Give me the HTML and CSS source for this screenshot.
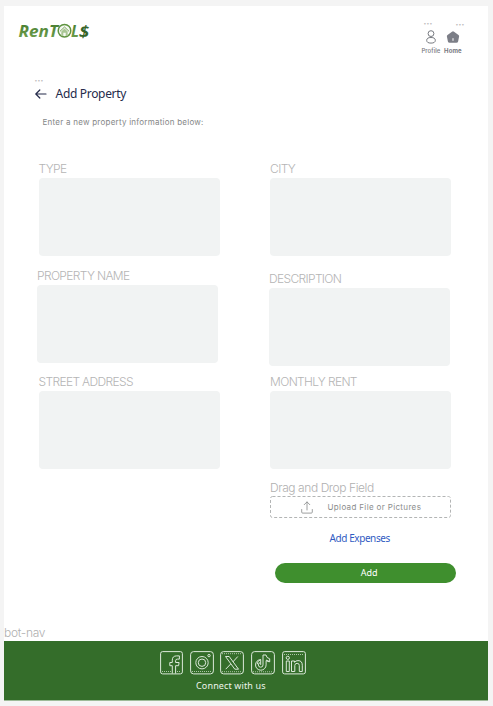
FILE: index.html
```html
<!DOCTYPE html>
<html lang="en">
<head>
<meta charset="utf-8">
<title>Add Property</title>
<link rel="stylesheet" href="styles.css">
</head>
<body>
<div class="page">
  <header class="top">
    <svg class="logo" width="84" height="28" viewBox="0 0 84 28">
      <defs>
        <linearGradient id="leaf" x1="0" y1="0" x2="0" y2="1"><stop offset="0" stop-color="#3c7429"/><stop offset="1" stop-color="#78a653"/></linearGradient>
      </defs>
      <g class="logo-text" fill="url(#leaf)">
        <text x="1.500" y="18" textLength="39.500" lengthAdjust="spacingAndGlyphs">RenT</text>
        <text x="54" y="18" textLength="8" lengthAdjust="spacingAndGlyphs">L</text>
      </g>
      <text class="logo-dollar" x="62" y="18" textLength="10" lengthAdjust="spacingAndGlyphs">$</text>
      <circle cx="47.500" cy="11.700" r="6.300" fill="#f6f9f3" stroke="#5f9340" stroke-width="1.500"/>
      <path d="M43 12.300l4.500-4.300 4.500 4.300" fill="none" stroke="#79a55a" stroke-width="1"/>
      <path d="M44.300 12.500l3.200-3 3.200 3V17h-2v-3.300h-2.400V17h-2Z" fill="#a9c694"/>
    </svg>
    <nav class="nav">
      <a class="nav-item profile"><span class="dots">•••</span>
        <svg width="12" height="14" viewBox="0 0 12 14" fill="none" stroke="#777a80" stroke-width="1"><circle cx="6" cy="3.600" r="2.900"/><ellipse cx="6" cy="10.300" rx="4.300" ry="2.800"/></svg>
        <span>Profile</span></a>
      <a class="nav-item home"><span class="dots">•••</span>
        <svg width="14" height="14" viewBox="0 0 14 14"><path d="M7 1.300Q7.500 1.300 8 1.700L12.500 5q.8.600.6 1.600l-1 4.800q-.3 1.400-1.700 1.400H3.600q-1.400 0-1.700-1.400l-1-4.800Q.7 5.600 1.500 5L6 1.700Q6.500 1.300 7 1.300Z" fill="#7c7e87"/><path d="M7 8.200v2.600" stroke="#fff" stroke-width="1"/></svg>
        <span>Home</span></a>
    </nav>
  </header>
  <div class="heading">
    <span class="dots">•••</span>
    <div class="title-row">
      <svg width="12" height="10" viewBox="0 0 12 10" fill="none" stroke="#252b4b" stroke-width="1.200" stroke-linecap="round" stroke-linejoin="round"><path d="M11 5H1M4.800 1L.8 5l4 4"/></svg>
      <h1>Add Property</h1>
    </div>
    <p class="intro">Enter a new property information below:</p>
  </div>
  <main class="form">
    <div class="column">
      <label class="field type"><span>TYPE</span><i class="box"></i></label>
      <label class="field name"><span>PROPERTY NAME</span><i class="box"></i></label>
      <label class="field street"><span>STREET ADDRESS</span><i class="box"></i></label>
    </div>
    <div class="column right">
      <label class="field city"><span>CITY</span><i class="box"></i></label>
      <label class="field desc"><span>DESCRIPTION</span><i class="box"></i></label>
      <label class="field rent"><span>MONTHLY RENT</span><i class="box"></i></label>
      <div class="drop-label">Drag and Drop Field</div>
      <div class="drop">
        <svg class="outline" width="182" height="22" viewBox="0 0 182 22"><rect x=".5" y=".5" width="180" height="21" rx="2" fill="none" stroke="#b3b5b5" stroke-dasharray="3 2"/></svg>
        <svg width="12" height="13" viewBox="0 0 12 13" fill="none" stroke="#858888" stroke-width=".8" stroke-linecap="round" stroke-linejoin="round"><path d="M6 9V1M3.200 3.700L6 .9l2.800 2.800M.7 8.500v2.600q0 1 1 1h8.600q1 0 1-1V8.500"/></svg>
        <span>Upload File or Pictures</span>
      </div>
      <a class="expenses">Add Expenses</a>
      <button class="add">Add</button>
    </div>
  </main>
  <div class="nav-label">bot-nav</div>
  <footer class="footer">
    <div class="social">
      <svg class="s1" width="23" height="24" viewBox="0 0 23 24"><rect x=".6" y=".6" width="21.800" height="22.300" rx="2"/><path d="M12.300 22.500v-7.800H9.800v-3.200h2.500V9.200q0-4.300 4.300-4.300h2.800v3.200h-2q-1.800 0-1.800 1.600v1.800h3.500l-.5 3.200h-3v7.800"/><path class="dash" d="M2 20.500h9M17 20.500h4"/></svg>
      <svg class="s2" width="24" height="24" viewBox="0 0 24 24"><rect x=".6" y=".6" width="22.800" height="22.300" rx="3"/><circle cx="12" cy="11.700" r="6.200"/><circle cx="12" cy="11.700" r="3.700"/><circle cx="19" cy="4.600" r="1.200"/><path class="dash" d="M2 20.500h20"/></svg>
      <svg class="s3" width="24" height="24" viewBox="0 0 24 24"><rect x=".6" y=".6" width="22.800" height="22.300" rx="3"/><path d="M5.500 5.500h3.700l9.300 12.700h-3.700ZM17.800 5.500l-5 5.500M10.700 13l-5 5.200"/><path class="dash" d="M2 2.700h20M2 20.700h20"/></svg>
      <svg class="s4" width="24" height="24" viewBox="0 0 24 24"><rect x=".6" y=".6" width="22.800" height="22.300" rx="3"/><path d="M12 4h3q.3 3 3.700 3.800v3q-2-.1-3.600-1.200v4.300a5.300 5.300 0 1 1-5.400-5.300v3a2.300 2.300 0 1 0 2.300 2.300Z"/><path d="M9.700 8.600a5 5 0 0 0-3.500 4.700M15 9l3.500 1.500M9.700 11.600v2.300"/><path class="dash" d="M2 20.800h20"/></svg>
      <svg class="s5" width="24" height="24" viewBox="0 0 24 24"><rect x=".6" y=".6" width="22.800" height="22.300" rx="2"/><path d="M4.300 10h3v10.500h-3ZM9.500 10h3v1.300q1.200-1.700 3.500-1.700 4.300 0 4.300 4.600v6.300h-3v-6q0-2.200-2.200-2.200t-2.300 2.200v6H9.500Z"/><circle cx="5.800" cy="6.800" r="1.600"/><path class="dash" d="M2 3.500h20"/></svg>
    </div>
    <p>Connect with us</p>
  </footer>
</div>
</body>
</html>
```

FILE: styles.css
```css
* { box-sizing: border-box; }
body { margin: 0; background: #f4f4f4; font-family: Inter, sans-serif; }
svg { display: block; flex: none; }
h1, p { margin: 0; font-weight: 400; }
.page { margin: 6px 4.600px 0 3.550px; height: 694.500px; background: #fff; display: flex; flex-direction: column; overflow: hidden; }
.top { height: 70px; flex: none; display: flex; justify-content: space-between; padding: 13px 26px 0 13.500px; }
.logo-text, .logo-dollar { font: italic 700 16.500px "Open Sans", sans-serif; }
.logo-dollar { fill: #35652a; }
.nav { display: flex; gap: 3px; padding-top: 1px; }
.nav-item { display: flex; flex-direction: column; align-items: center; font: 500 6px/8px Inter, sans-serif; color: #777980; white-space: nowrap; }
.nav-item svg { margin: 4px 0 3px; }
.profile { width: 19px; letter-spacing: .05px; }
.home { width: 19px; font-weight: 700; letter-spacing: .1px; }
.dots { font: 5px/6px Inter, sans-serif; letter-spacing: .2px; color: #bbb; }
.profile .dots { margin-left: -6px; }
.home .dots { margin-left: 14px; padding-top: 1px; height: 6px; }
.heading { height: 79px; flex: none; padding: 1px 0 0 31px; }
.heading .dots { display: block; }
.title-row { display: flex; align-items: center; gap: 9px; height: 18px; margin-top: 2px; }
h1 { font: 400 12px/18px "Noto Sans", sans-serif; letter-spacing: -.32px; color: #252b4b; white-space: nowrap; }
.intro { margin: 13px 0 0 8px; font-size: 8px; line-height: 12px; letter-spacing: .24px; color: #858787; white-space: nowrap; }
.form { display: flex; gap: 50px; padding-left: 33.500px; height: 467px; flex: none; }
.column { width: 182px; display: flex; flex-direction: column; }
.field { display: block; width: 181px; color: #b5b5b5; font: 300 12px/15px Inter, sans-serif; letter-spacing: -.65px; }
.field span, .drop-label { display: block; white-space: nowrap; }
.box { display: block; height: 78px; margin-top: 2px; border-radius: 4px; background: #f1f3f3; }
.type { margin: 6px 0 0 1.500px; }
.name { margin-top: 12px; }
.street { margin: 11px 0 0 1.500px; }
.city { margin: 5.500px 0 0 1px; }
.desc { margin-top: 15.500px; }
.rent { margin: 8px 0 0 1px; }
.drop-label { margin: 11px 0 0 1px; font: 300 12px/15px Inter, sans-serif; letter-spacing: -.42px; color: #b0b0b0; }
.drop { position: relative; display: flex; align-items: center; height: 22px; width: 182px; margin: 1px 0 0 1px; padding-left: 30.500px; gap: 15px; color: #8b8d8d; font-size: 8px; letter-spacing: .35px; white-space: nowrap; }
.outline { position: absolute; left: 0; top: 0; }
.expenses { margin: 12px 0 0 60.500px; color: #315bc2; font: 400 10px/16px "Noto Sans", sans-serif; letter-spacing: -.42px; white-space: nowrap; }
.add { margin: 17px 0 0 5.500px; width: 181px; height: 20px; flex: none; padding: 0 0 0 8px; border: 0; border-radius: 10px; background: #3f8f2e; color: #fff; font: 400 9px/20px "Noto Sans", sans-serif; letter-spacing: 0; }
.nav-label { height: 19px; flex: none; padding: 2px 0 0 .5px; color: #b0b0b0; font: 300 12px/18px Inter, sans-serif; letter-spacing: -.3px; }
.footer { height: 59.500px; flex: none; background: #346d2a; border-bottom: 1px solid #9dba98; padding-top: 10px; }
.social { display: flex; gap: 6.500px; padding-left: 156.500px; }
.social svg { fill: none; stroke: #dce9da; stroke-width: 1; }
.social .s5 { margin-left: 1px; }
.social .dash { stroke-width: .9; stroke-dasharray: 1 1; opacity: .8; }
.footer p { margin-top: 4px; padding-left: 192.500px; color: #edf4ec; font: 400 9px/14px "Noto Sans", sans-serif; letter-spacing: .13px; white-space: nowrap; }
```
